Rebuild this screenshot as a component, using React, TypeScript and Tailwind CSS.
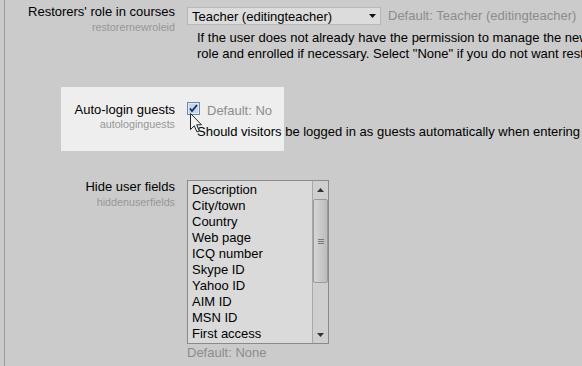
import React from "react";

const items = [
  "Description",
  "City/town",
  "Country",
  "Web page",
  "ICQ number",
  "Skype ID",
  "Yahoo ID",
  "AIM ID",
  "MSN ID",
  "First access",
];

function Checkbox() {
  return (
    <svg width="13" height="13" viewBox="0 0 13 13" className="shrink-0 block">
      <rect x="0.5" y="0.5" width="12" height="12" fill="#dfe9f3" stroke="#6f8aa6" />
      <rect x="2" y="2" width="9" height="9" fill="#c3d7ea" />
      <path d="M3 6.5 L5 9 L10 3" fill="none" stroke="#1c2a6b" strokeWidth="1.8" />
    </svg>
  );
}

function Cursor() {
  return (
    <svg width="14" height="21" viewBox="0 0 14 21" className="absolute left-[190px] top-[113px]">
      <path
        d="M0.5 0.5 L0.5 16.5 L4.3 12.8 L7 19 L9.3 18 L6.7 11.8 L11.5 11.8 Z"
        fill="#f4f4f4"
        stroke="#222"
        strokeWidth="1"
        strokeLinejoin="miter"
      />
    </svg>
  );
}

export default function App() {
  return (
    <div className="relative w-[582px] h-[366px] overflow-hidden bg-[#cbcbcb] text-[13px] text-black font-['Liberation_Sans',Arial,sans-serif]">
      <div className="ml-[4px] h-full border-l border-[#9a9a9a]">
        {/* Row 1 */}
        <div className="flex pt-[4px]">
          <div className="w-[170px] shrink-0 text-right">
            <div className="leading-[16px]">Restorers' role in courses</div>
            <div className="mt-[1px] text-[10.75px] leading-[12px] text-[#979797]">restorernewroleid</div>
          </div>
          <div className="ml-[12px] shrink-0 pt-[3px]">
            <div className="flex items-center">
              <div className="flex h-[18px] w-[194px] items-center border border-[#b8b8b8] bg-[#dcdcdc] pl-[4px] pr-[3px]">
                <span className="flex-1 leading-[13px]">Teacher (editingteacher)</span>
                <svg width="7" height="4" viewBox="0 0 7 4" className="mr-[1px]">
                  <path d="M0 0 H7 L3.5 4 Z" fill="#111" />
                </svg>
              </div>
              <span className="ml-[7px] leading-[16px] text-[#8c8c8c] whitespace-nowrap">
                Default: Teacher (editingteacher)
              </span>
            </div>
            <div className="mt-[5px] pl-[10px] leading-[16px] whitespace-nowrap">
              <div>If the user does not already have the permission to manage the new</div>
              <div>role and enrolled if necessary. Select "None" if you do not want restorers</div>
            </div>
          </div>
        </div>

        {/* Row 2 (highlighted) */}
        <div className="mt-[25px] ml-[56px] flex h-[64px] w-[223px] bg-[#eeeeee] pt-[15px]">
          <div className="w-[114px] shrink-0 text-right">
            <div className="leading-[16px]">Auto-login guests</div>
            <div className="text-[10.75px] leading-[12px] text-[#979797]">autologinguests</div>
          </div>
          <div className="ml-[12px] shrink-0">
            <div className="flex items-start">
              <Checkbox />
              <span className="ml-[7px] mt-[1px] leading-[16px] text-[#8c8c8c] whitespace-nowrap">Default: No</span>
            </div>
            <div className="mt-[5px] pl-[10px] leading-[16px] whitespace-nowrap">
              Should visitors be logged in as guests automatically when entering
            </div>
          </div>
        </div>

        {/* Row 3 */}
        <div className="mt-[28px] flex">
          <div className="w-[170px] shrink-0 text-right">
            <div className="leading-[16px]">Hide user fields</div>
            <div className="mt-[1px] text-[10.75px] leading-[12px] text-[#979797]">hiddenuserfields</div>
          </div>
          <div className="ml-[12px] shrink-0 pt-[1px]">
            <div className="flex h-[164px] w-[142px] border border-[#8a8a8a] bg-[#dadada]">
              <div className="flex-1 pl-[4px] pt-[1px] leading-[16px]">
                {items.map((t) => (
                  <div key={t}>{t}</div>
                ))}
              </div>
              <div className="flex w-[16px] flex-col border-l border-[#a8a8a8] bg-[#cfcfcf]">
                <div className="flex h-[17px] items-center justify-center">
                  <svg width="7" height="4" viewBox="0 0 7 4">
                    <path d="M0 4 H7 L3.5 0 Z" fill="#333" />
                  </svg>
                </div>
                <div className="mt-[1px] flex h-[84px] items-center justify-center rounded-[2px] border border-[#9a9a9a] bg-gradient-to-r from-[#d6d6d6] to-[#bdbdbd]">
                  <div className="flex flex-col gap-[1px]">
                    <div className="h-[1px] w-[6px] bg-[#777]" />
                    <div className="h-[1px] w-[6px] bg-[#777]" />
                    <div className="h-[1px] w-[6px] bg-[#777]" />
                  </div>
                </div>
                <div className="flex-1" />
                <div className="flex h-[17px] items-center justify-center">
                  <svg width="7" height="4" viewBox="0 0 7 4">
                    <path d="M0 0 H7 L3.5 4 Z" fill="#333" />
                  </svg>
                </div>
              </div>
            </div>
            <div className="mt-[1px] leading-[16px] text-[#8c8c8c]">Default: None</div>
          </div>
        </div>
      </div>
      <Cursor />
    </div>
  );
}
